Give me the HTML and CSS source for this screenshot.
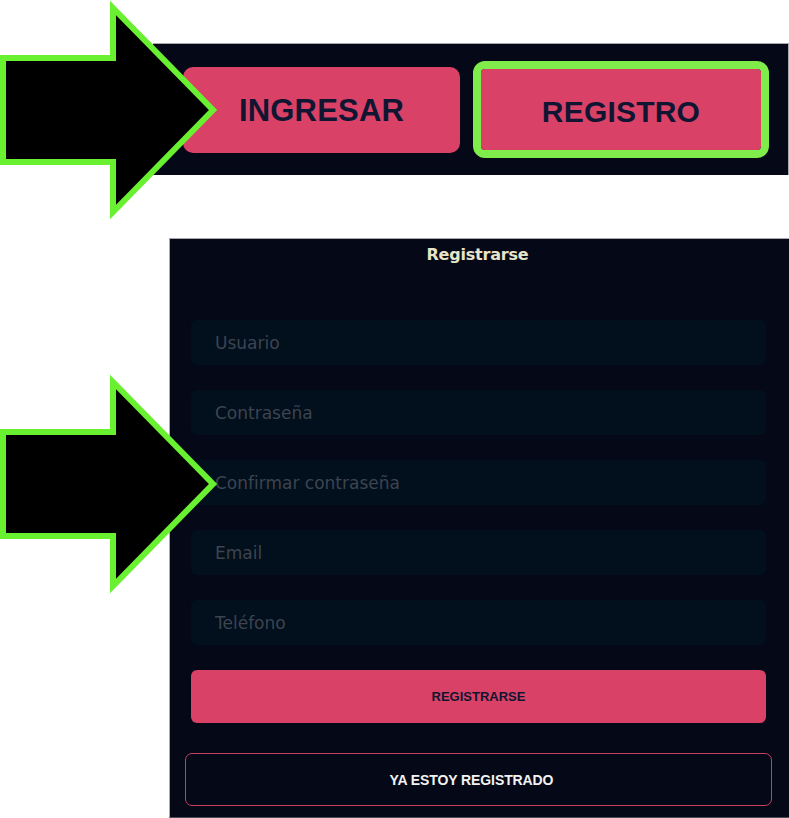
FILE: index.html
```html
<!DOCTYPE html>
<html lang="es">
<head>
<meta charset="utf-8">
<title>Registro</title>
<link rel="stylesheet" href="styles.css">
</head>
<body>
<div class="page">
  <div class="topbar">
    <button class="btn-big">INGRESAR</button>
    <div class="highlight">
      <button class="btn-big btn-fill">REGISTRO</button>
    </div>
  </div>

  <form class="panel">
    <h2 class="title">Registrarse</h2>
    <div class="fields">
      <input class="field" type="text" placeholder="Usuario">
      <input class="field" type="password" placeholder="Contraseña">
      <input class="field" type="password" placeholder="Confirmar contraseña">
      <input class="field" type="email" placeholder="Email">
      <input class="field" type="tel" placeholder="Teléfono">
      <button class="btn-submit" type="button">REGISTRARSE</button>
      <button class="btn-outline" type="button">YA ESTOY REGISTRADO</button>
    </div>
  </form>

  <svg class="arrows" width="789" height="818" viewBox="0 0 789 818" aria-hidden="true">
    <polygon class="arrow" points="3,58 113,58 113,8 213,110 113,212 113,162 3,162"/>
    <polygon class="arrow" points="3,432 113,432 113,382 213,484 113,586 113,536 3,536"/>
  </svg>
</div>
</body>
</html>
```
FILE: styles.css
```css
* { box-sizing: border-box; }
html, body { margin: 0; padding: 0; background: #ffffff; }
body { width: 789px; height: 818px; overflow: hidden; }

.page { position: relative; width: 789px; height: 818px; padding-top: 43px; }

.topbar {
  margin-left: 153px;
  width: 636px;
  height: 132px;
  background: #050816;
  border-top: 1px solid #a9a9ad;
  border-right: 1px solid #a9a9ad;
  display: flex;
  align-items: center;
  padding-left: 30px;
  gap: 13px;
}

.btn-big {
  width: 277px;
  height: 86px;
  border: none;
  border-radius: 10px;
  background: #d94266;
  color: #101532;
  font-family: "Liberation Sans", Arial, sans-serif;
  font-weight: 700;
  font-size: 31px;
  letter-spacing: 0.2px;
  padding: 3px 0 0;
}

.highlight {
  width: 296px;
  height: 97px;
  border: 8px solid #7fec4b;
  border-radius: 12px;
  background: #050816;
  display: flex;
}

.btn-fill {
  width: 100%;
  height: 100%;
  border-radius: 4px;
  font-size: 30px;
  padding-top: 4px;
}

.panel {
  margin: 63px 0 0 169px;
  width: 620px;
  height: 580px;
  background: #050816;
  border-top: 1px solid #a9a9ad;
  border-left: 1px solid #a9a9ad;
  border-bottom: 1px solid #4a4d57;
  display: flex;
  flex-direction: column;
}

.title {
  margin: 6px 0 0;
  text-align: center;
  font-family: "DejaVu Sans", sans-serif;
  font-weight: 700;
  font-size: 16px;
  line-height: 20px;
  color: #e6e5c9;
  letter-spacing: -0.2px;
  padding-right: 4px;
}

.fields {
  margin-top: 55px;
  padding: 0 23px 0 21px;
  display: flex;
  flex-direction: column;
  gap: 25px;
}

.field {
  display: block;
  width: 100%;
  height: 45px;
  border: none;
  border-radius: 6px;
  background: #020f1c;
  padding: 0 0 0 24px;
  font-family: "DejaVu Sans", sans-serif;
  font-size: 17px;
  color: #c9ccd2;
  outline: none;
}
.field::placeholder { color: #3d4450; opacity: 1; }

.btn-submit {
  height: 53px;
  border: none;
  border-radius: 6px;
  background: #d94266;
  color: #101532;
  font-family: "Liberation Sans", Arial, sans-serif;
  font-weight: 700;
  font-size: 13px;
  letter-spacing: 0;
  padding: 0;
}

.btn-outline {
  margin: 5px -6px 0;
  height: 53px;
  border: 1px solid #c9405f;
  border-radius: 7px;
  background: transparent;
  color: #f2f2f2;
  font-family: "Liberation Sans", Arial, sans-serif;
  font-weight: 700;
  font-size: 14px;
  letter-spacing: -0.1px;
  padding: 0 14px 0 0;
}

.arrows {
  position: absolute;
  left: 0;
  top: 0;
  pointer-events: none;
}
.arrow {
  fill: #000000;
  stroke: #69f030;
  stroke-width: 6;
  stroke-linejoin: miter;
}
```
